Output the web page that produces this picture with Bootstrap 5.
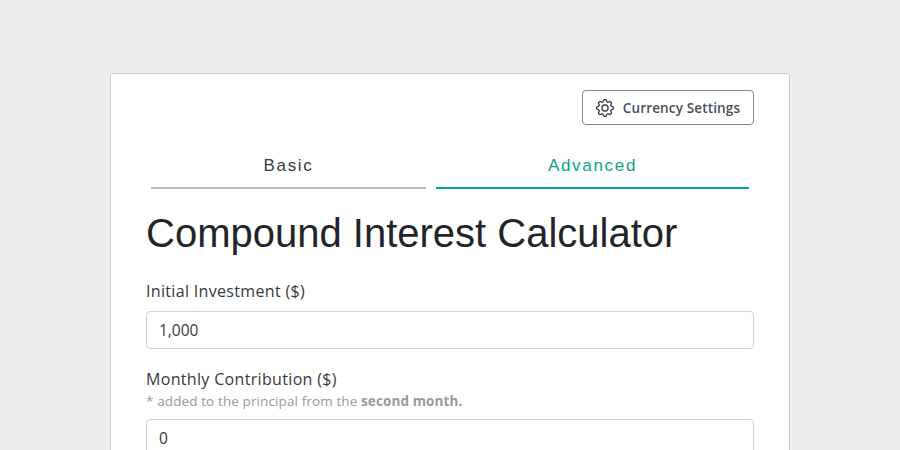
<!DOCTYPE html>
<html lang="en"><head><meta charset="utf-8">
<link href="https://cdn.jsdelivr.net/npm/bootstrap@5.3.0/dist/css/bootstrap.min.css" rel="stylesheet">
<style>
html,body{height:450px;overflow:hidden}
body{background:#eee;font-family:"Open Sans","Liberation Sans",sans-serif;padding-top:73px}
.calc-panel{width:680px;margin:0 auto;background:#fff;border:1px solid #ccc;border-radius:3px 3px 0 0;padding:16px 35px 0;height:400px}
.set-btn{width:172px;height:35px;border:1px solid #888;border-radius:4px;background:#fff;color:#495057;font-size:13.5px;letter-spacing:.15px;font-weight:600;gap:9px;padding:0}
.set-btn span{padding-top:2px}
.set-btn svg{stroke:#343a40;stroke-width:.2}
.tab-row{margin:19px 5px 0 5px;padding:0;gap:10px;list-style:none}
.tab-row .tab-a{font-family:"Liberation Sans",sans-serif;font-size:17px;letter-spacing:1.7px;height:45px;display:flex;align-items:center;justify-content:center;text-decoration:none;color:#343a40;border-bottom:2px solid #bbb;padding-bottom:0}
.tab-row .tab-on{color:#0aa38c;border-bottom-color:#0aa38c}
.tab-one{width:275px}.tab-two{width:313px}
.calc-title{font-family:"Liberation Sans",sans-serif;font-size:40px;font-weight:400;color:#212529;margin:20px 0 0;line-height:48px}
.fld-label{display:block;font-size:16px;letter-spacing:.33px;color:#343a40;margin:0;line-height:24px}
.fld-note{font-size:13.5px;letter-spacing:.11px;color:#999;line-height:16px;margin:2px 0 10px}
.fld-note b{font-weight:700}
.calc-input{height:38px;border-color:#ced4da;color:#343a40;font-size:15.5px;border-radius:4px}
.fld-one{margin-top:22px}.fld-two{margin-top:18px}
</style></head><body>
<div class="calc-panel">
<div class="d-flex justify-content-end">
<button type="button" class="btn set-btn d-flex align-items-center justify-content-center">
<svg width="18" height="18" viewBox="0 0 16 16" fill="#343a40"><path d="M8 4.754a3.246 3.246 0 1 0 0 6.492 3.246 3.246 0 0 0 0-6.492zM5.754 8a2.246 2.246 0 1 1 4.492 0 2.246 2.246 0 0 1-4.492 0z"/><path d="M9.796 1.343c-.527-1.79-3.065-1.79-3.592 0l-.094.319a.873.873 0 0 1-1.255.52l-.292-.16c-1.64-.892-3.433.902-2.54 2.541l.159.292a.873.873 0 0 1-.52 1.255l-.319.094c-1.79.527-1.79 3.065 0 3.592l.319.094a.873.873 0 0 1 .52 1.255l-.16.292c-.892 1.64.901 3.434 2.541 2.54l.292-.159a.873.873 0 0 1 1.255.52l.094.319c.527 1.79 3.065 1.79 3.592 0l.094-.319a.873.873 0 0 1 1.255-.52l.292.16c1.64.893 3.434-.902 2.54-2.541l-.159-.292a.873.873 0 0 1 .52-1.255l.319-.094c1.79-.527 1.79-3.065 0-3.592l-.319-.094a.873.873 0 0 1-.52-1.255l.16-.292c.893-1.64-.902-3.433-2.541-2.54l-.292.159a.873.873 0 0 1-1.255-.52l-.094-.319zm-2.633.283c.246-.835 1.428-.835 1.674 0l.094.319a1.873 1.873 0 0 0 2.693 1.115l.291-.16c.764-.415 1.6.42 1.184 1.185l-.159.292a1.873 1.873 0 0 0 1.116 2.692l.318.094c.835.246.835 1.428 0 1.674l-.319.094a1.873 1.873 0 0 0-1.115 2.693l.16.291c.415.764-.42 1.6-1.185 1.184l-.291-.159a1.873 1.873 0 0 0-2.693 1.116l-.094.318c-.246.835-1.428.835-1.674 0l-.094-.319a1.873 1.873 0 0 0-2.692-1.115l-.292.16c-.764.415-1.6-.42-1.184-1.185l.159-.291A1.873 1.873 0 0 0 1.945 8.93l-.319-.094c-.835-.246-.835-1.428 0-1.674l.319-.094A1.873 1.873 0 0 0 3.06 4.377l-.16-.292c-.415-.764.42-1.6 1.185-1.184l.292.159a1.873 1.873 0 0 0 2.692-1.115l.094-.319z"/></svg>
<span>Currency Settings</span></button>
</div>
<ul class="nav tab-row">
<li class="nav-item tab-one"><a class="tab-a" href="#">Basic</a></li>
<li class="nav-item tab-two"><a class="tab-a tab-on" href="#">Advanced</a></li>
</ul>
<h1 class="calc-title">Compound Interest Calculator</h1>
<form>
<div class="fld-one">
<label class="fld-label mb-2" for="fa">Initial Investment ($)</label>
<input id="fa" class="form-control calc-input" value="1,000">
</div>
<div class="fld-two">
<label class="fld-label" for="fb">Monthly Contribution ($)</label>
<div class="fld-note">* added to the principal from the <b>second month.</b></div>
<input id="fb" class="form-control calc-input" value="0">
</div>
</form>
</div>
<script src="https://cdn.jsdelivr.net/npm/bootstrap@5.3.0/dist/js/bootstrap.bundle.min.js"></script>
</body></html>
